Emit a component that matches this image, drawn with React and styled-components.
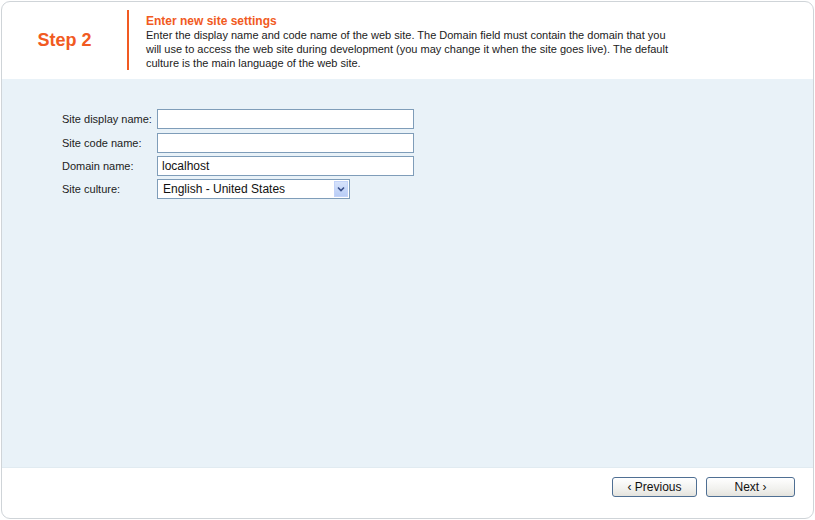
import React from "react";
import styled, { createGlobalStyle } from "styled-components";

const GlobalStyle = createGlobalStyle`
  html, body {
    margin: 0;
    padding: 0;
    background: #ffffff;
  }
  body {
    font-family: "Liberation Sans", Arial, sans-serif;
    font-size: 11px;
    color: #222222;
  }
`;

const Frame = styled.div`
  margin: 1px;
  width: 811px;
  height: 516px;
  border: 1px solid #cfd4d8;
  border-radius: 9px;
  overflow: hidden;
  display: flex;
  flex-direction: column;
  background: #ffffff;
`;

const Header = styled.div`
  height: 77px;
  display: flex;
  align-items: flex-start;
  padding-top: 8px;
  box-sizing: border-box;
`;

const StepBox = styled.div`
  width: 125px;
  height: 60px;
  display: flex;
  align-items: center;
  justify-content: center;
  border-right: 2px solid #f15a22;
  color: #f15a22;
  font-size: 18px;
  font-weight: bold;
`;

const Intro = styled.div`
  padding: 4px 0 0 17px;
  line-height: 14px;
  white-space: nowrap;
`;

const Title = styled.div`
  color: #f15a22;
  font-size: 12px;
  font-weight: bold;
`;

const Description = styled.div`
  font-size: 11px;
  color: #222222;
`;

const Body = styled.div`
  flex: 1;
  background: #e9f2f8;
  border-bottom: 1px solid #e1ebf1;
  padding: 30px 0 0 60px;
`;

const Row = styled.div`
  display: flex;
  align-items: center;
  height: 20px;
  margin-bottom: ${(p) => p.$gap || 4}px;
`;

const Label = styled.label`
  width: 95px;
  font-size: 11px;
  color: #222222;
`;

const TextInput = styled.input`
  box-sizing: border-box;
  width: 257px;
  height: 20px;
  border: 1px solid #7f9db9;
  background: #ffffff;
  padding: 0 4px;
  font-family: "Liberation Sans", Arial, sans-serif;
  font-size: 12px;
  color: #111111;
  outline: none;
`;

const SelectBox = styled.div`
  box-sizing: border-box;
  width: 193px;
  height: 20px;
  border: 1px solid #7f9db9;
  background: #ffffff;
  display: flex;
  align-items: center;
  padding: 1px;
`;

const SelectText = styled.div`
  flex: 1;
  padding-left: 4px;
  font-size: 12px;
  color: #111111;
`;

const ArrowButton = styled.div`
  width: 14px;
  height: 16px;
  background: linear-gradient(#d6e2fb, #b9cdf6);
  border: 1px solid #c3d3f9;
  box-sizing: border-box;
  display: flex;
  align-items: center;
  justify-content: center;
`;

const Footer = styled.div`
  height: 50px;
  display: flex;
  justify-content: flex-end;
  align-items: flex-start;
  gap: 9px;
  padding: 9px 18px 0 0;
  box-sizing: border-box;
`;

const Button = styled.button`
  box-sizing: border-box;
  width: ${(p) => p.$width}px;
  height: 20px;
  border: 1px solid #4f6f93;
  border-radius: 3px;
  background: linear-gradient(#ffffff, #f1f1ee 60%, #e4e3dd);
  font-family: "Liberation Sans", Arial, sans-serif;
  font-size: 12px;
  color: #111111;
  padding: 0;
  cursor: pointer;
`;

const fields = [
  { label: "Site display name:", value: "" },
  { label: "Site code name:", value: "" },
  { label: "Domain name:", value: "localhost" },
];

export default function App() {
  return (
    <>
      <GlobalStyle />
      <Frame>
        <Header>
          <StepBox>Step 2</StepBox>
          <Intro>
            <Title>Enter new site settings</Title>
            <Description>
              Enter the display name and code name of the web site. The Domain field must contain the domain that you
              <br />
              will use to access the web site during development (you may change it when the site goes live). The default
              <br />
              culture is the main language of the web site.
            </Description>
          </Intro>
        </Header>
        <Body>
          {fields.map((f, i) => (
            <Row key={f.label} $gap={i === 0 ? 4 : 3}>
              <Label>{f.label}</Label>
              <TextInput defaultValue={f.value} />
            </Row>
          ))}
          <Row>
            <Label>Site culture:</Label>
            <SelectBox>
              <SelectText>English - United States</SelectText>
              <ArrowButton>
                <svg width="8" height="6" viewBox="0 0 8 6">
                  <path d="M1 1.5 L4 4.5 L7 1.5" fill="none" stroke="#3a4f8a" strokeWidth="1.6" />
                </svg>
              </ArrowButton>
            </SelectBox>
          </Row>
        </Body>
        <Footer>
          <Button $width={85}>&lsaquo; Previous</Button>
          <Button $width={89}>Next &rsaquo;</Button>
        </Footer>
      </Frame>
    </>
  );
}
